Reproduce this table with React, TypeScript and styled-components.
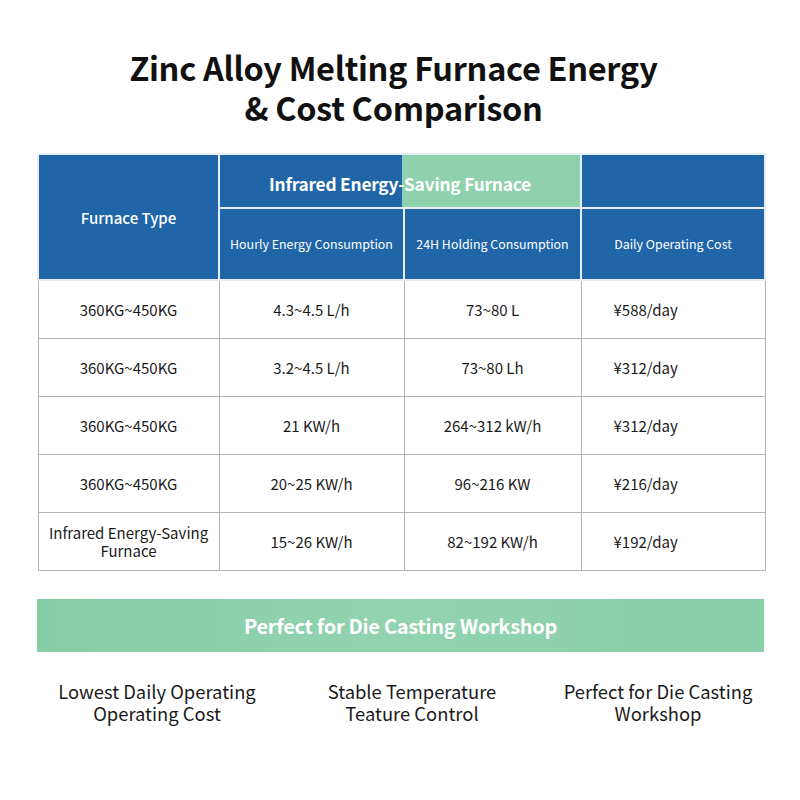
import { createGlobalStyle, styled } from 'styled-components';

const GlobalStyle = createGlobalStyle`
  html, body {
    margin: 0;
    padding: 0;
    background: #ffffff;
  }
  body {
    font-family: "Noto Sans CJK KR", "Noto Sans CJK SC", "Noto Sans", sans-serif;
    color: #1a1a1a;
  }
`;

const rows = [
  { type: '360KG~450KG', hourly: '4.3~4.5 L/h', holding: '73~80 L', cost: '¥588/day' },
  { type: '360KG~450KG', hourly: '3.2~4.5 L/h', holding: '73~80 Lh', cost: '¥312/day' },
  { type: '360KG~450KG', hourly: '21 KW/h', holding: '264~312 kW/h', cost: '¥312/day' },
  { type: '360KG~450KG', hourly: '20~25 KW/h', holding: '96~216 KW', cost: '¥216/day' },
  { type: 'Infrared Energy-Saving Furnace', hourly: '15~26 KW/h', holding: '82~192 KW/h', cost: '¥192/day' },
];

const features = [
  ['Lowest Daily Operating', 'Operating Cost'],
  ['Stable Temperature', 'Teature Control'],
  ['Perfect for Die Casting', 'Workshop'],
];

const App = () => {
  return (
    <Page>
      <GlobalStyle />
      <Title>
        Zinc Alloy Melting Furnace Energy
        <br />& Cost Comparison
      </Title>
      <Table>
        <colgroup>
          <col style={{ width: 181 }} />
          <col style={{ width: 185 }} />
          <col style={{ width: 177 }} />
          <col style={{ width: 184 }} />
        </colgroup>
        <thead>
          <tr>
            <HeadCell rowSpan={2} $size={15}>
              Furnace Type
            </HeadCell>
            <GroupCell colSpan={2}>
              <GroupLabel>Infrared Energy-Saving Furnace</GroupLabel>
            </GroupCell>
            <HeadCell $top />
          </tr>
          <tr>
            <HeadCell $size={12.4}>Hourly Energy Consumption</HeadCell>
            <HeadCell $size={12.4}>24H Holding Consumption</HeadCell>
            <HeadCell $size={12.4}>Daily Operating Cost</HeadCell>
          </tr>
        </thead>
        <tbody>
          {rows.map((row, i) => (
            <tr key={i}>
              <Cell>{row.type}</Cell>
              <Cell>{row.hourly}</Cell>
              <Cell>{row.holding}</Cell>
              <Cell $left>{row.cost}</Cell>
            </tr>
          ))}
        </tbody>
      </Table>
      <Banner>Perfect for Die Casting Workshop</Banner>
      <Features>
        {features.map((f, i) => (
          <Feature key={i}>
            {f[0]}
            <br />
            {f[1]}
          </Feature>
        ))}
      </Features>
    </Page>
  );
};
export default App;

const Page = styled.div`
  width: 800px;
  height: 800px;
  box-sizing: border-box;
  padding: 47px 36px 0 37px;
  display: flex;
  flex-direction: column;
  align-items: stretch;
`;

const Title = styled.h1`
  margin: 0 0 26px;
  text-align: center;
  font-size: 32.5px;
  line-height: 40px;
  font-weight: 700;
  color: #111;
  letter-spacing: -0.3px;
  padding-right: 14px;
`;

const Table = styled.table`
  width: 727px;
  border-collapse: collapse;
  table-layout: fixed;
`;

const HeadCell = styled.th<{ $size?: number; $top?: boolean }>`
  background: #1f65a7;
  color: #ffffff;
  font-size: ${(p) => p.$size ?? 13}px;
  font-weight: ${(p) => ((p.$size ?? 13) > 14 ? 500 : 400)};
  border: 2px solid #e8eef5;
  height: ${(p) => (p.$top ? 52 : 70)}px;
  padding: 0;
  text-align: center;
  vertical-align: middle;
  white-space: nowrap;
`;

const GroupCell = styled.th`
  height: 52px;
  padding: 0;
  border: 2px solid #e8eef5;
  background: linear-gradient(to right, #1f65a7 0, #1f65a7 50.5%, #8fd0ad 50.5%, #8fd0ad 100%);
  text-align: center;
  vertical-align: middle;
`;

const GroupLabel = styled.span`
  display: inline-block;
  padding-top: 4px;
  color: #ffffff;
  font-size: 17.3px;
  font-weight: 700;
  letter-spacing: -0.2px;
`;

const Cell = styled.td<{ $left?: boolean }>`
  border: 1.5px solid #b5b5b5;
  height: 57px;
  padding: 0 ${(p) => (p.$left ? '0 0 32px' : '10px')};
  font-size: 15px;
  line-height: 18px;
  color: #1a1a1a;
  text-align: ${(p) => (p.$left ? 'left' : 'center')};
  vertical-align: middle;
`;

const Banner = styled.div`
  margin-top: 28px;
  width: 727px;
  height: 53px;
  display: flex;
  align-items: center;
  justify-content: center;
  background: linear-gradient(to right, #86cda6, #92d3b0 50%, #88cea8);
  color: #ffffff;
  font-size: 20px;
  font-weight: 700;
  letter-spacing: -0.3px;
`;

const Features = styled.div`
  margin-top: 28px;
  display: grid;
  grid-template-columns: 240px 270px 222px;
`;

const Feature = styled.div`
  text-align: center;
  font-size: 18.4px;
  line-height: 22px;
  color: #1a1a1a;
`;
